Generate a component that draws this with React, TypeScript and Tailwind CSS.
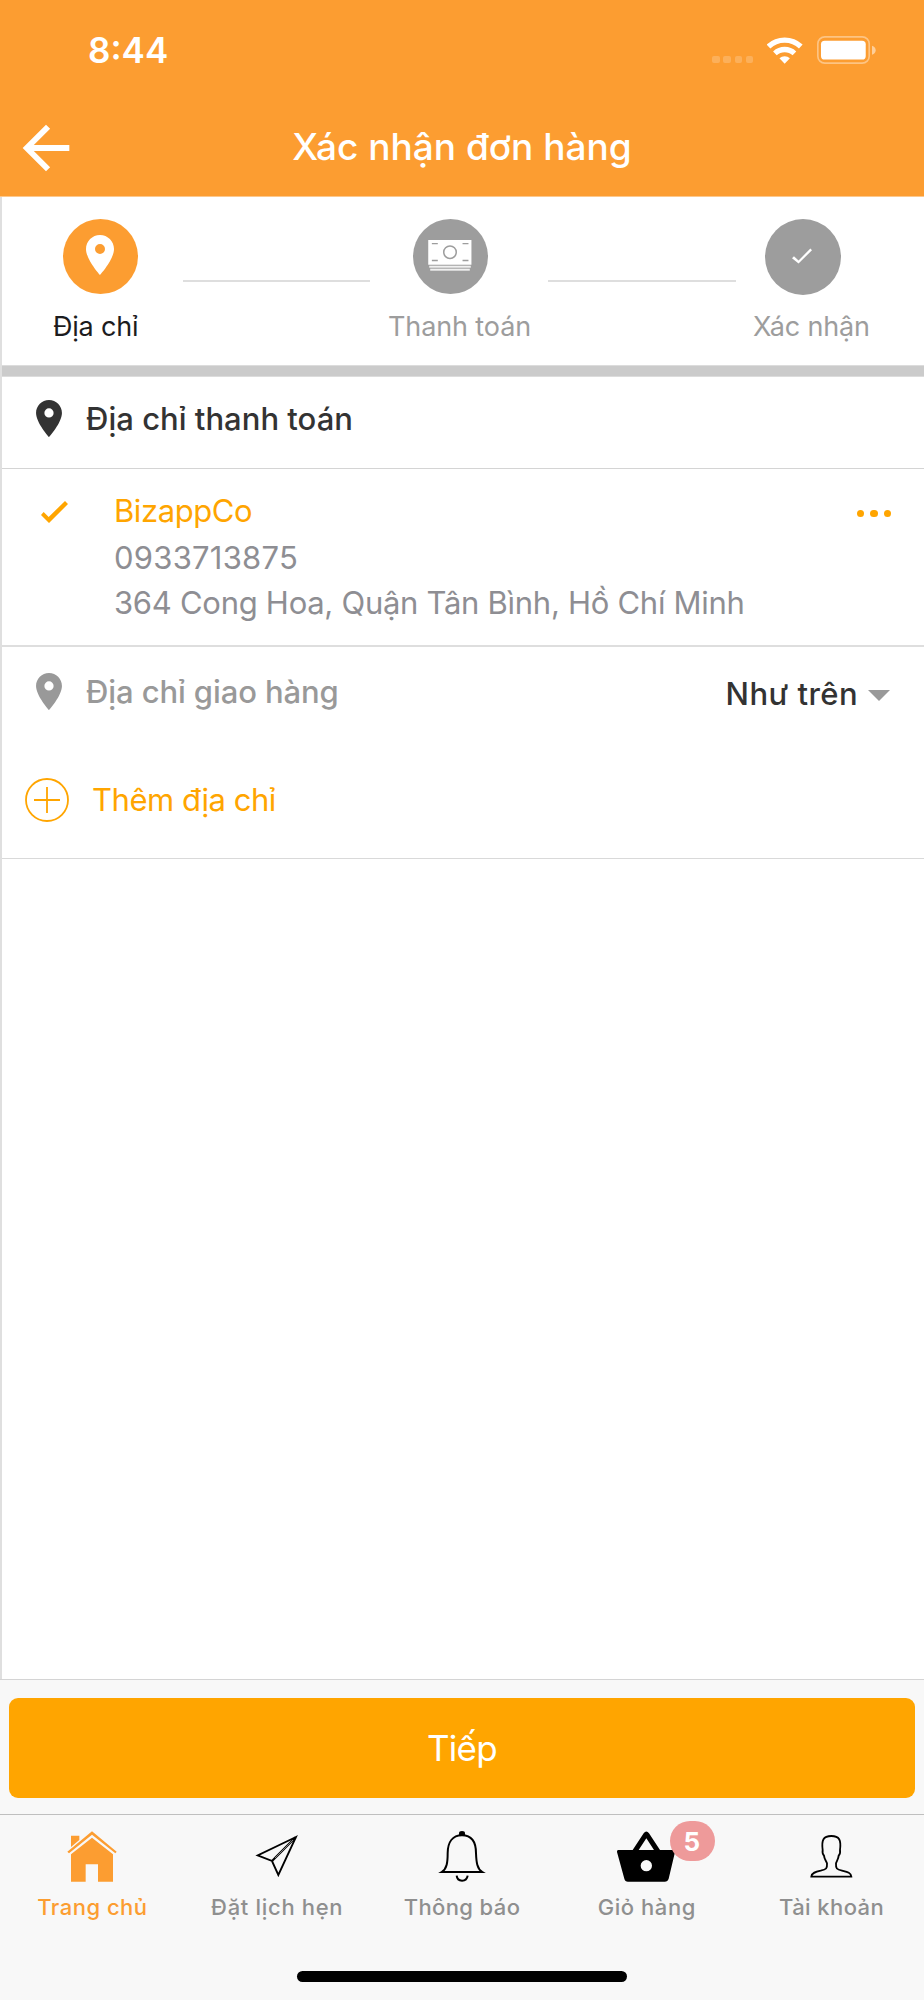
import React, { useState } from 'react';
import clsx from 'clsx';

/* ---------- Icons ---------- */

function PinIcon({ className }: { className?: string }) {
    return (
        <svg viewBox="5 2 14 20" fill="currentColor" className={className}>
            <path d="M12 2C8.13 2 5 5.13 5 9c0 5.25 7 13 7 13s7-7.75 7-13c0-3.87-3.13-7-7-7zm0 9.5a2.5 2.5 0 0 1 0-5 2.5 2.5 0 0 1 0 5z" />
        </svg>
    );
}

function MoneyIcon() {
    return (
        <svg viewBox="84 90 132 94" className="h-[31px] w-11">
            <rect x="84" y="90" width="131" height="75" fill="#fff" />
            <rect x="87" y="168" width="126" height="6" fill="#f0f0f0" />
            <rect x="90" y="177" width="120" height="6" fill="#f0f0f0" />
            <g fill="none" stroke="#9d9d9d" strokeWidth="4.5">
                <circle cx="150" cy="127" r="19" />
                <path d="M95 101h18M188 101h18M95 152h18M188 152h18" />
            </g>
        </svg>
    );
}

function StatusIcons() {
    return (
        <div className="flex items-center pr-[48px] pb-px text-white">
            <div className="mt-[19px] flex gap-[3.7px] opacity-20">
                <span className="size-[7.4px] rounded-[2px] bg-white" />
                <span className="size-[7.4px] rounded-[2px] bg-white" />
                <span className="size-[7.4px] rounded-[2px] bg-white" />
                <span className="size-[7.4px] rounded-[2px] bg-white" />
            </div>
            <svg viewBox="916 110 108 80" className="ml-[14px] h-[27px] w-9">
                <g fill="none" stroke="currentColor" strokeWidth="16">
                    <path d="M920.6 138.1A71 71 0 0 1 1017.4 138.1" />
                    <path d="M939.7 158.6A43 43 0 0 1 998.3 158.6" />
                </g>
                <path fill="currentColor" d="M969 190L953.3 173.2A23 23 0 0 1 984.7 173.2Z" />
            </svg>
            <svg viewBox="1065 109 178 84" fill="currentColor" className="ml-[14px] h-7 w-[59px]">
                <rect x="1067.5" y="111.5" width="155" height="79" rx="21" fill="none" stroke="currentColor" strokeWidth="5" opacity=".4" />
                <rect x="1077" y="123" width="135" height="57" rx="11" />
                <path d="M1231 138q11 4 11 13.5t-11 13.5z" opacity=".5" />
            </svg>
        </div>
    );
}

function HomeIcon() {
    return (
        <svg viewBox="190 483 174 156" fill="currentColor" className="h-[52px] w-[58px] text-[#fc9d31]">
            <path d="M203 545L277 484L351 545L347 550L277 494L208 550Z" />
            <path d="M214 497H239V510L214 531Z" />
            <path d="M277 503L340 553V635H295V583H258V635H214V553Z" />
        </svg>
    );
}

function PlaneIcon() {
    return (
        <svg viewBox="745 483 174 156" fill="none" stroke="currentColor" strokeWidth="5.5" className="h-[52px] w-[58px]">
            <path d="M889 501L774 556L817 573L836 615Z" />
            <path d="M817 573L888 502" strokeWidth="6.5" />
            <path d="M826 564L880 510" stroke="#c4c4c4" strokeWidth="2" />
        </svg>
    );
}

function BellIcon() {
    return (
        <svg viewBox="9 33 174 156" fill="none" stroke="currentColor" strokeWidth="6" className="h-[52px] w-[58px]">
            <path d="M87 45V40a9 7 0 0 1 18 0V45Z" fill="currentColor" stroke="none" />
            <path d="M35 156C51 146 53 126 53 100C53 66 68 46 96 46C124 46 138 66 138 100C139 126 141 146 157 156Z" />
            <path d="M80 167C82 187 110 187 113 167" />
        </svg>
    );
}

function BasketIcon() {
    return (
        <svg viewBox="467 483 174 156" className="h-[52px] w-[58px] overflow-visible">
            <path
                fill="currentColor"
                fillRule="evenodd"
                d="M468 540H511L544 490Q552 479 560 490L593 540H634Q639 540 638 546L619 626Q616 635 607 635H497Q488 635 486 626L464 546Q463 540 468 540ZM529 540H575L552 505ZM552 570a17 17 0 1 0 0 34a17 17 0 1 0 0-34Z"
            />
        </svg>
    );
}

function PersonIcon() {
    return (
        <svg viewBox="1022 483 174 156" fill="none" stroke="currentColor" strokeWidth="5.5" className="h-[52px] w-[58px]">
            <path d="M1047 620C1048 608 1060 605 1075 602C1092 598 1095 596 1094 580C1091 571 1086 568 1085 557C1080 552 1080 546 1081 540C1077 510 1083 498 1107 498C1131 498 1137 510 1133 540C1134 546 1134 552 1129 557C1128 568 1123 572 1121 580C1120 596 1123 598 1139 602C1155 606 1166 608 1167 620Z" />
        </svg>
    );
}

/* ---------- Data ---------- */

const TABS = [
    { key: 'home', label: 'Trang chủ', icon: HomeIcon, tracking: 'tracking-[0.48px]' },
    { key: 'booking', label: 'Đặt lịch hẹn', icon: PlaneIcon, tracking: 'tracking-[0.68px]' },
    { key: 'notify', label: 'Thông báo', icon: BellIcon, tracking: 'tracking-[0.38px]' },
    { key: 'cart', label: 'Giỏ hàng', icon: BasketIcon, tracking: 'tracking-[0.55px]', badge: 5 },
    { key: 'account', label: 'Tài khoản', icon: PersonIcon, tracking: 'tracking-[0.42px]' },
];

/* ---------- Sections ---------- */

function Header() {
    return (
        <header className="flex h-[197px] shrink-0 flex-col border-b border-[#fdc88c] bg-[#fc9d31] text-white">
            <div className="flex h-[101px] items-center justify-between pl-[88px]">
                <span className="text-[35px] font-semibold">8:44</span>
                <StatusIcons />
            </div>
            <div className="grid h-[94px] grid-cols-[81px_1fr_81px] items-center">
                <button type="button" aria-label="Quay lại" className="pl-[11px]">
                    <svg viewBox="0 0 24 24" fill="currentColor" className="size-[70px]">
                        <path d="M20 11H7.83l5.59-5.59L12 4l-8 8 8 8 1.41-1.41L7.83 13H20v-2z" />
                    </svg>
                </button>
                <h1 className="pb-[2px] text-center text-[37px] leading-[48px] font-[550]">Xác nhận đơn hàng</h1>
            </div>
        </header>
    );
}

function Steps() {
    return (
        <div className="flex h-[168px] items-start pt-[22px] pl-[51px] text-[27px] text-[#9d9d9d]">
            <div className="w-[130px]">
                <div className="ml-[10px] flex size-[75px] items-center justify-center rounded-full bg-[#fc9d31] pr-px pb-[3px]">
                    <PinIcon className="h-10 w-7 text-white" />
                </div>
                <p className="mt-[17px] leading-8 tracking-[-0.2px] text-[#1c1c1e]">Địa chỉ</p>
            </div>
            <div className="mt-[61px] h-[2px] w-[187px] bg-[#dedede]" />
            <div className="ml-[18px] w-[160px]">
                <div className="ml-[25px] flex size-[75px] items-center justify-center rounded-full bg-[#9d9d9d] pr-px pb-[2px]">
                    <MoneyIcon />
                </div>
                <p className="mt-[17px] leading-8 tracking-[-0.12px]">Thanh toán</p>
            </div>
            <div className="mt-[61px] h-[2px] w-[188px] bg-[#dedede]" />
            <div className="ml-[17px]">
                <div className="ml-3 flex size-[76px] items-center justify-center rounded-full bg-[#9d9d9d] pr-[2px] pb-[2px]">
                    <svg viewBox="990 173 61 47" fill="#fff" className="h-4 w-5">
                        <path d="M990 203L996 197L1010 210L1046 174L1051 179L1010 219Z" />
                    </svg>
                </div>
                <p className="mt-4 leading-8 tracking-[-0.15px]">Xác nhận</p>
            </div>
        </div>
    );
}

function BillingAddress() {
    return (
        <section className="text-[31px]">
            <div className="flex h-[92px] items-start border-b border-[#d4d4d4] pl-[34px] text-[#333]">
                <PinIcon className="mt-[23px] h-[37px] w-[26px]" />
                <h2 className="mt-6 ml-6 leading-9 font-medium tracking-[0.02px]">Địa chỉ thanh toán</h2>
            </div>
            <div className="flex h-[178px] items-start border-b-2 border-[#dedede] pt-5 pl-[39px] text-[#8e8e93]">
                <svg viewBox="124 391 81 66" className="mt-3 h-[22px] w-[27px] text-[#ffa500]">
                    <path fill="currentColor" d="M124 433L132 424L147 439L196 391L205 400L148 457Z" />
                </svg>
                <div className="ml-[46px] flex-1 leading-[46px]">
                    <p className="-mt-px tracking-[-0.42px] text-[#ffa500]">BizappCo</p>
                    <p className="mt-px tracking-[0.24px]">0933713875</p>
                    <p className="-mt-px tracking-[-0.28px]">364 Cong Hoa, Quận Tân Bình, Hồ Chí Minh</p>
                </div>
                <button type="button" aria-label="Tùy chọn" className="mt-[21px] mr-[33px] flex gap-[6px]">
                    <span className="size-[7.3px] rounded-full bg-[#ffa500]" />
                    <span className="size-[7.3px] rounded-full bg-[#ffa500]" />
                    <span className="size-[7.3px] rounded-full bg-[#ffa500]" />
                </button>
            </div>
        </section>
    );
}

function ShippingAddress() {
    return (
        <section className="h-[212px] border-b border-[#d9d9d9] text-[31px] leading-9">
            <div className="flex h-[90px] items-start pl-[34px] text-[#999]">
                <PinIcon className="mt-[26px] h-[37px] w-[26px]" />
                <h2 className="mt-[27px] ml-6 font-medium tracking-[-0.1px]">Địa chỉ giao hàng</h2>
                <button type="button" className="mt-[29px] mr-[34px] ml-auto flex items-center">
                    <span className="font-medium tracking-[0.45px] text-[#333]">Như trên</span>
                    <svg viewBox="0 0 22 11" className="mt-[2px] ml-[10px] h-[11px] w-[22px]">
                        <path d="M0 0H22L11 11Z" fill="#999" />
                    </svg>
                </button>
            </div>
            <button type="button" className="mt-[41px] flex h-11 items-center pl-[23px] text-[#ffa500]">
                <svg viewBox="0 0 44 44" fill="none" stroke="currentColor" strokeWidth="1.8" className="size-11">
                    <circle cx="22" cy="22" r="21" />
                    <path d="M9 22H35M22 9V35" />
                </svg>
                <span className="ml-[23px] tracking-[-0.47px]">Thêm địa chỉ</span>
            </button>
        </section>
    );
}

function TabBar() {
    const [active, setActive] = useState('home');

    return (
        <nav className="h-[186px] shrink-0 border-t border-[#bfbfbf]">
            <div className="grid grid-cols-5 pt-4">
                {TABS.map(({ key, label, icon: Icon, tracking, badge }) => (
                    <button key={key} type="button" onClick={() => setActive(key)} className="flex flex-col items-center text-black">
                        <span className="relative">
                            <Icon />
                            {badge && (
                                <span className="absolute -top-[10px] left-[52px] flex h-[40px] w-[45px] items-center justify-center rounded-full bg-[#ee9a9a] pr-px text-[26px] font-bold text-white">
                                    {badge}
                                </span>
                            )}
                        </span>
                        <span className={clsx('mt-[10px] text-[22px] leading-7 font-[450]', tracking, active === key ? 'text-[#fc9d31]' : 'text-[#8f8f8f]')}>
                            {label}
                        </span>
                    </button>
                ))}
            </div>
            <div className="mx-auto mt-[50px] h-[11px] w-[330px] rounded-full bg-black" />
        </nav>
    );
}

export default function App() {
    return (
        <div className="flex h-[2000px] w-[924px] flex-col overflow-hidden bg-[#f8f8f8] font-['Inter','Liberation_Sans',sans-serif]">
            <Header />
            <main className="flex-1 border-l-2 border-[#dfdfdf] bg-white">
                <Steps />
                <div className="h-3 border-y border-[#dcdcdc] bg-[#cbcbcb]" />
                <BillingAddress />
                <ShippingAddress />
            </main>
            <div className="h-[135px] shrink-0 border-t border-[#d4d4d4] px-[9px] pt-[18px]">
                <button type="button" className="h-[100px] w-full rounded-[9px] bg-[#ffa500] pt-px text-[35px] tracking-[-0.7px] text-white">
                    Tiếp
                </button>
            </div>
            <TabBar />
        </div>
    );
}
